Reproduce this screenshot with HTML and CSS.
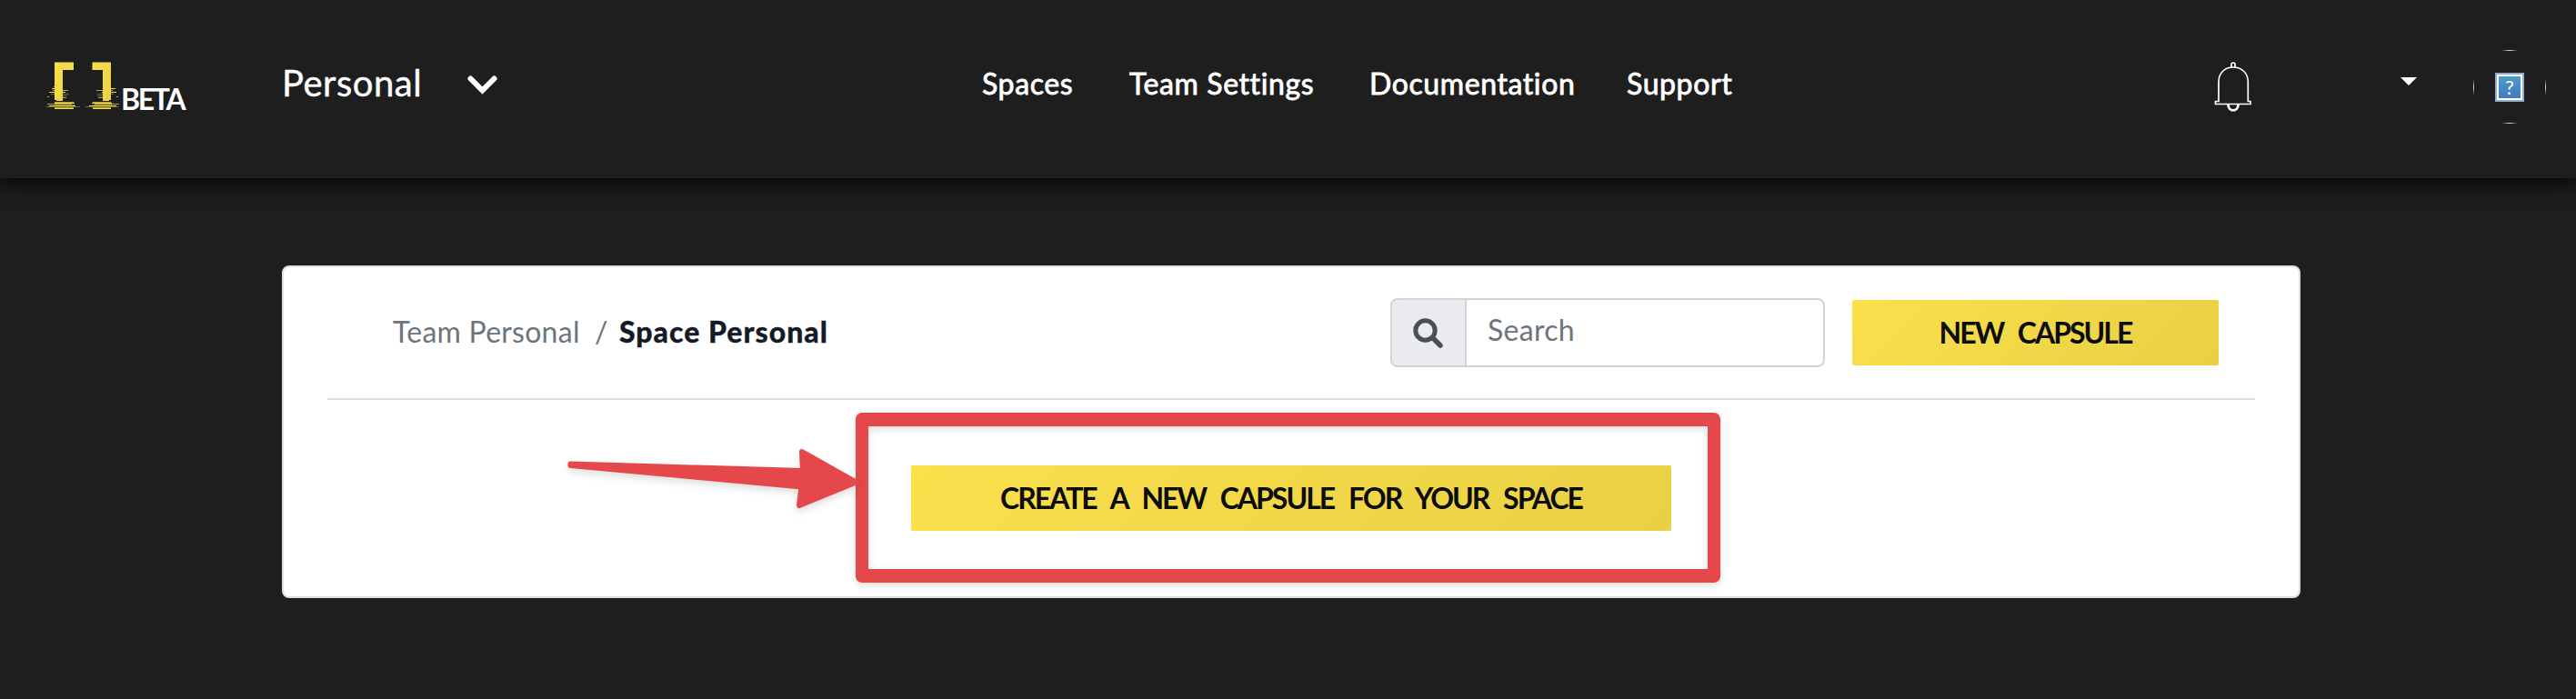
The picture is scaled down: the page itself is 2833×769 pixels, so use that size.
FILE: index.html
```html
<!DOCTYPE html>
<html lang="en">
<head>
<meta charset="utf-8">
<title>Space Personal</title>
<link rel="stylesheet" href="styles.css">
</head>
<body>
<header class="topbar">
  <a class="brand">
    <svg class="brand-mark" width="84" height="60" viewBox="48 64 84 60">
      <defs><linearGradient id="gold" x1="0" y1="0" x2="1" y2="1"><stop offset="0" stop-color="#fae04b"/><stop offset="1" stop-color="#e9d044"/></linearGradient></defs>
      <path fill="url(#gold)" d="M60 68.500h21v8.500h-12v33h-9z"/>
      <path fill="url(#gold)" d="M101.500 68.500h20.500v41.500h-9v-33h-11.500z"/>
      <g stroke="#f0d848" stroke-width="1">
        <path d="M57 97.500h12M54 101.500h18M113 97.500h14M112 101.500h16M62 110.500h7M113 110.500h7M60 119.500h21M102 119.500h20M54 116.500h29M98 116.500h30M60 113.500h22M101 113.500h22"/>
        <path stroke-opacity=".7" d="M59 95.500h9M52 106.500h2M60 107.500h13M128 106.500h2M108 107.500h14M60 112.500h21M102 112.500h20M52 114.500h27M104 114.500h27M58 99.500h17M106 99.500h18M60 118.500h21M102 118.500h20"/>
        <path stroke-opacity=".4" d="M69 105.500h5M107 105.500h6M51 117.500h37M94 117.500h37M60 115.500h22M102 115.500h21M56 103.500h20M107 103.500h18"/>
      </g>
    </svg>
    <span class="beta">BETA</span>
  </a>
  <div class="team"><span class="team-name">Personal</span>
    <svg class="chevron" width="36" height="24" viewBox="0 0 36 24"><path d="M4.500 5.500 17.500 18.500 30.500 5.500" fill="none" stroke="#fff" stroke-width="6" stroke-linecap="round"/></svg>
  </div>
  <nav class="menu">
    <a class="m1">Spaces</a><a class="m2">Team Settings</a><a class="m3">Documentation</a><a class="m4">Support</a>
  </nav>
  <div class="account">
    <svg class="bell" width="42" height="56" viewBox="0 0 42 56" fill="none" stroke="#fff" stroke-width="1.700">
      <path d="M19 6.300V3a2 2 0 0 1 4 0v3.300M5 43.500V22C5 12 12 6 21 6s16.300 6 16.300 16v21.500H40v3H1.500v-3z"/>
      <path stroke-width="2.800" d="M15.500 47c0 8.500 11 8.500 11 0"/>
    </svg>
    <svg class="caret" width="18" height="9" viewBox="0 0 18 9"><path fill="#fff" d="M0 0h18L9 9z"/></svg>
    <div class="avatar"><span class="missing">?</span></div>
  </div>
</header>
<main class="card">
  <div class="card-head">
    <div class="crumbs"><span class="c1">Team Personal</span><span class="c2">/</span><span class="c3">Space Personal</span></div>
    <div class="search">
      <span class="search-icon"><svg width="34" height="34" viewBox="0 0 34 34" fill="none" stroke="#495057"><circle cx="13.500" cy="13.500" r="10.700" stroke-width="5"/><path d="M22 22l8 8" stroke-width="5.500" stroke-linecap="round"/></svg></span>
      <span class="search-text">Search</span>
    </div>
    <button class="btn new"><span>NEW CAPSULE</span></button>
  </div>
  <div class="card-body">
    <button class="btn create"><span>CREATE A NEW CAPSULE FOR YOUR SPACE</span></button>
  </div>
</main>
<div class="frame"></div>
<svg class="arrow" width="340" height="90" viewBox="614 484 340 90"><path fill="#e5484b" stroke="#e5484b" stroke-width="6" stroke-linejoin="round" d="M627.500 510.500 883 518 882 497 941.500 530.500 879 556 881.500 535.500 627.500 512z"/></svg>
</body>
</html>
```
FILE: styles.css
```css
* { box-sizing: border-box; }
body { margin: 0; width: 2833px; height: 769px; overflow: hidden; background: #1e1e1e; font-family: Lato, "Open Sans", sans-serif; font-size: 32px; line-height: 40px; font-variant-ligatures: none; }
.topbar { height: 196px; display: flex; align-items: flex-start; color: #fff; background: #1e1e1e; box-shadow: 0 2px 22px 2px #000; white-space: nowrap; }
.brand { display: flex; margin-left: 48px; padding-top: 64px; width: 262px; }
.brand-mark { flex: none; }
.beta { margin: 25px 0 0 1px; font-weight: 700; letter-spacing: -2.3px; }
.team { display: flex; width: 770px; padding-top: 66px; font-size: 40px; line-height: 50px; letter-spacing: .5px; -webkit-text-stroke: .4px #fff; }
.chevron { margin: 15px 0 0 49px; }
.menu { display: flex; width: 1355px; padding-top: 72px; letter-spacing: .6px; -webkit-text-stroke: .8px #fff; }
.m1 { width: 162px; } .m2 { width: 264px; } .m3 { width: 283px; }
.account { display: flex; }
.bell { margin-top: 68px; }
.caret { margin: 85px 0 0 163px; }
.avatar { width: 80px; height: 81px; margin: 55px 0 0 62px; display: flex; align-items: center; justify-content: center; background: linear-gradient(90deg, transparent, #ddd, transparent) center top / 18px 1px no-repeat, linear-gradient(90deg, transparent, #ddd, transparent) center bottom / 18px 1px no-repeat, linear-gradient(transparent, #ddd, transparent) left center / 1px 18px no-repeat, linear-gradient(transparent, #ddd, transparent) right center / 1px 18px no-repeat; }
.missing { width: 32px; height: 32px; border: 2px solid #8fabd0; background: linear-gradient(#4f9dd0, #3d7ab8); box-shadow: inset 0 0 0 2px #fff; font: 22px/28px Lato, sans-serif; text-align: center; }
.card { width: 2220px; height: 366px; margin: 96px 0 0 310px; border: 2px solid #dedede; border-radius: 8px; background: #fff; padding: 0 48px; }
.card-head { height: 146px; border-bottom: 2px solid #dedede; display: flex; padding: 36px 38px 0 72px; white-space: nowrap; }
.crumbs { display: flex; width: 1097px; padding-top: 15px; color: #6c757d; }
.c1 { width: 222px; letter-spacing: .25px; } .c2 { width: 27px; } .c3 { color: #151b26; font-weight: 900; letter-spacing: .1px; -webkit-text-stroke: .3px #151b26; }
.c3 { letter-spacing: 1px; }
.search { display: flex; width: 478px; height: 76px; margin-top: -2px; border: 2px solid #ced4da; border-radius: 8px; overflow: hidden; color: #6c757d; }
.search-icon { width: 82px; background: #e9ebef; border-right: 2px solid #ced4da; padding: 20px 0 0 23px; line-height: 0; }
.search-text { padding: 13px 0 0 23px; letter-spacing: .3px; }
.btn { border: 0; padding: 0; height: 72px; border-radius: 2px; background: linear-gradient(135deg, #fae04b, #e9d044); color: #0c0c0c; font: 700 32px/72px Lato, sans-serif; letter-spacing: -2px; word-spacing: 10px; white-space: nowrap; }
.new { width: 403px; margin: 0 0 0 30px; }
.create { width: 836px; }
.card-body { display: flex; padding: 72px 0 0 642px; }
.frame { position: absolute; left: 941px; top: 454px; width: 951px; height: 187px; border: solid #e5484b; border-width: 15px 14px; border-radius: 7px; box-shadow: 0 3px 8px #0002, inset 0 3px 8px #0002; }
.arrow { position: absolute; left: 614px; top: 484px; filter: drop-shadow(0 4px 4px #0002); }
```
